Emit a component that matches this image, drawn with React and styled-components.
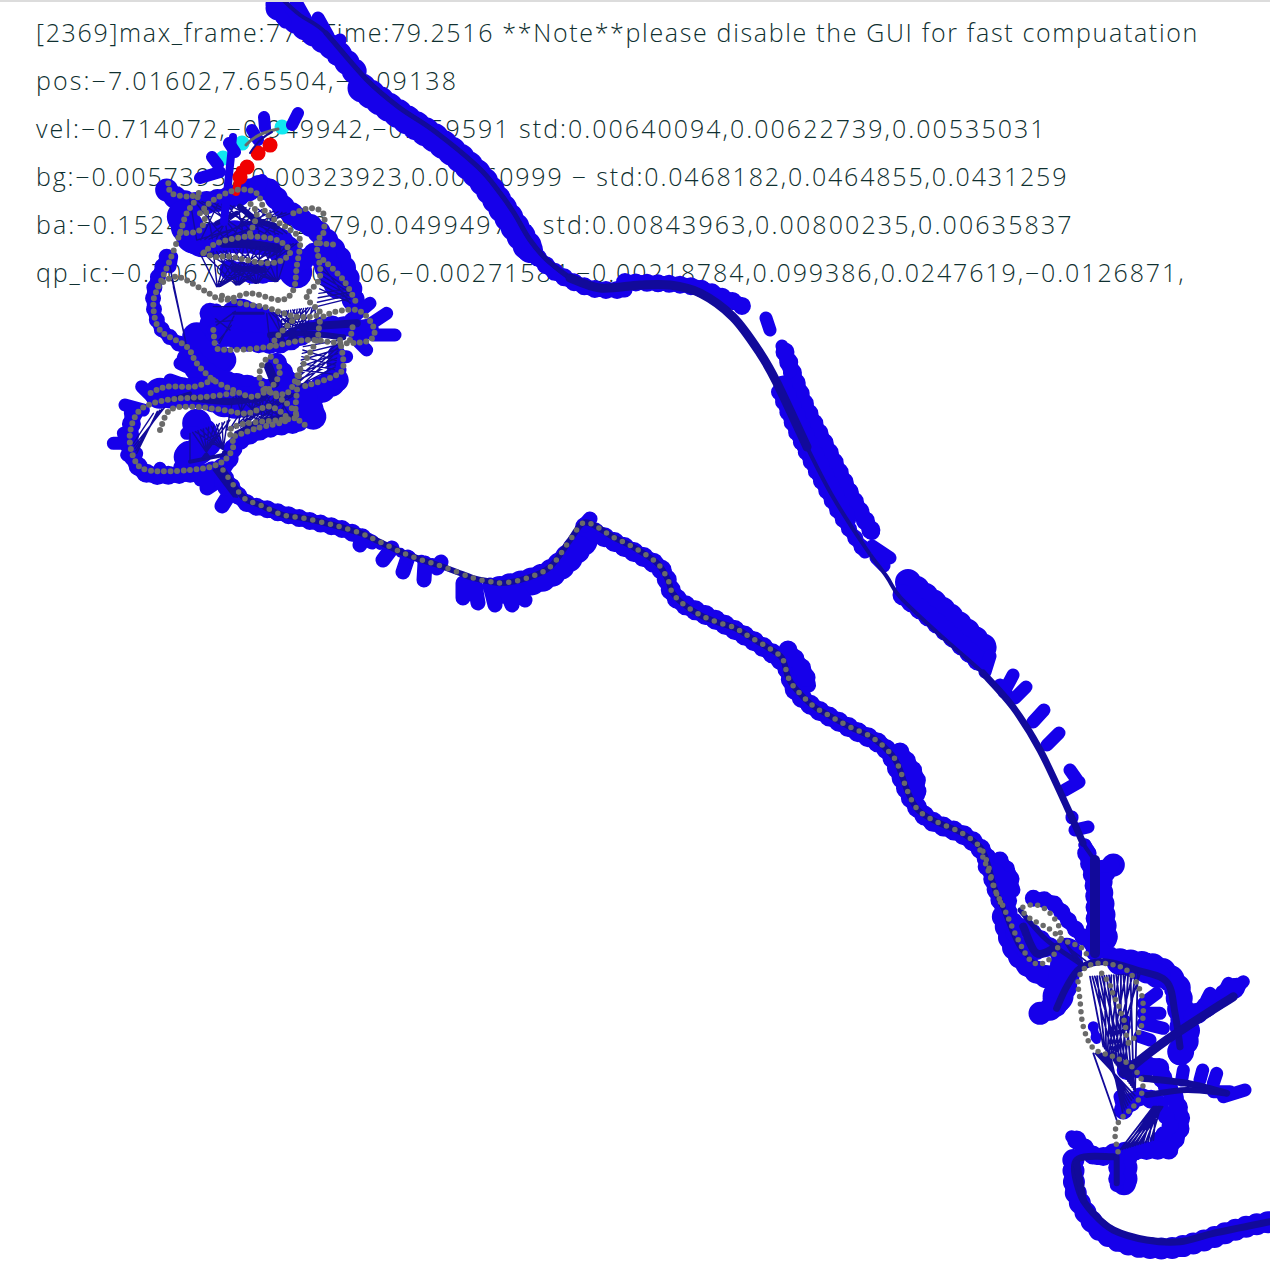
import React from 'react';
import styled, { createGlobalStyle } from 'styled-components';

const GlobalStyle = createGlobalStyle`
  html, body { margin: 0; padding: 0; background: #fff; }
`;

const Page = styled.div`
  position: relative;
  width: 1270px;
  height: 1266px;
  overflow: hidden;
  background: #fff;
  border-top: 2px solid #dcdcdc;
  box-sizing: border-box;
`;

const Hud = styled.div`
  display: flex;
  flex-direction: column;
  padding: 6px 0 0 36px;
`;

const HudRow = styled.div`
  height: 48px;
  line-height: 48px;
  white-space: pre;
  font-family: "Open Sans", "Liberation Sans", sans-serif;
  font-weight: 300;
  font-size: 25px;
  color: #0f3030;
  letter-spacing: ${(p) => p.$spacing}px;
`;

const Plot = styled.svg`
  position: absolute;
  left: 0;
  top: -2px;
`;

const Stroke = styled.path`
  fill: none;
  stroke: ${(p) => p.$color};
  stroke-width: ${(p) => p.$w}px;
  stroke-linecap: round;
  stroke-linejoin: round;
  stroke-dasharray: ${(p) => p.$dash || 'none'};
`;

const BLUE = '#1600ea';
const NAVY = '#120a9a';
const GRAY = '#6a6a6a';

const rows = [
  ['[2369]max_frame:777 Time:79.2516 **Note**please disable the GUI for fast compuatation', 1.67],
  ['pos:−7.01602,7.65504,−1.09138', 2.1],
  ['vel:−0.714072,−0.949942,−0.259591 std:0.00640094,0.00622739,0.00535031', 2.02],
  ['bg:−0.00573937,0.00323923,0.00760999 − std:0.0468182,0.0464855,0.0431259', 1.82],
  ['ba:−0.152486,−0.682279,0.0499497 − std:0.00843963,0.00800235,0.00635837', 2.12],
  ['qp_ic:−0.706793,0.0707406,−0.00271584,−0.00218784,0.099386,0.0247619,−0.0126871,', 1.88],
];

// catmull-rom through the points
const smooth = (pts) => {
  let d = `M${pts[0][0]} ${pts[0][1]}`;
  for (let i = 0; i < pts.length - 1; i++) {
    const a = pts[i - 1] || pts[i];
    const b = pts[i];
    const c = pts[i + 1];
    const e = pts[i + 2] || c;
    const c1x = b[0] + (c[0] - a[0]) / 6;
    const c1y = b[1] + (c[1] - a[1]) / 6;
    const c2x = c[0] - (e[0] - b[0]) / 6;
    const c2y = c[1] - (e[1] - b[1]) / 6;
    d += `C${c1x.toFixed(1)} ${c1y.toFixed(1)} ${c2x.toFixed(1)} ${c2y.toFixed(1)} ${c[0].toFixed(1)} ${c[1].toFixed(1)}`;
  }
  return d;
};

const seg = (s) => `M${s[0]} ${s[1]}L${s[2]} ${s[3]}`;

// fan of thin lines between two segments
const fan = (a, b, n) => {
  let d = '';
  for (let i = 0; i < n; i++) {
    const t = i / (n - 1);
    const u = (t * 7.3) % 1;
    d += `M${a[0] + (a[2] - a[0]) * t} ${a[1] + (a[3] - a[1]) * t}L${b[0] + (b[2] - b[0]) * u} ${b[1] + (b[3] - b[1]) * u}`;
  }
  return d;
};

// points read from crops of the two clusters
const c1 = (pts) => pts.map(([x, y]) => [90 + x / 3, 100 + y / 3]);
const c2 = (pts) => pts.map(([x, y]) => [980 + x / 3, 840 + y / 3]);
const c1s = (s) => [90 + s[0] / 3, 100 + s[1] / 3, 90 + s[2] / 3, 100 + s[3] / 3];
const c2s = (s) => [980 + s[0] / 3, 840 + s[1] / 3, 980 + s[2] / 3, 840 + s[3] / 3];

const topSpine = [[283, 0], [300, 15], [326, 33], [367, 80], [400, 108], [433, 130], [478, 167], [500, 193], [514, 213], [530, 240], [547, 260], [570, 278], [600, 288], [640, 285], [670, 285], [700, 293], [733, 317], [760, 353], [777, 383], [807, 447], [833, 497], [867, 550], [887, 577], [900, 597], [940, 635], [983, 673], [1013, 707], [1040, 750], [1067, 807], [1083, 843], [1097, 867], [1095, 900], [1095, 953]];

const topBands = [
  { pts: [[278, 8], [305, 28], [335, 50], [355, 72]], w: 22 },
  { pts: [[362, 88], [400, 115], [440, 142], [478, 175], [505, 212], [530, 250]], w: 26 },
  { pts: [[530, 250], [555, 272], [590, 288], [625, 290]], w: 15 },
  { pts: [[625, 282], [690, 286], [730, 300], [742, 306]], w: 15 },
  { pts: [[785, 352], [805, 405], [828, 450], [852, 497], [872, 532]], w: 16 },
  { pts: [[779, 392], [795, 430], [815, 470], [840, 515], [865, 552]], w: 13 },
  { pts: [[783, 385], [803, 430], [825, 475], [848, 520]], w: 16 },
  { pts: [[908, 582], [945, 612], [985, 648]], w: 23 },
  { pts: [[903, 595], [945, 630], [980, 662]], w: 18 },
];

const topWhiskers = [
  [766, 318, 770, 330], [782, 346, 790, 372], [872, 546, 890, 558], [876, 558, 884, 566],
  [1013, 675, 1004, 692], [1026, 687, 1015, 698], [1044, 710, 1033, 722], [1059, 733, 1047, 745],
  [1079, 782, 1065, 790], [1088, 827, 1075, 830], [1072, 817, 1072, 818], [1085, 845, 1090, 858],
  [990, 656, 985, 672], [272, 4, 285, 22], [296, 2, 305, 18], [318, 18, 328, 36], [340, 40, 334, 58], [1077, 780, 1070, 770],
  [1000, 685, 1006, 692],
];

const midSpine = [[223, 470], [243, 497], [260, 505], [283, 515], [303, 518], [333, 525], [360, 533], [380, 542], [403, 553], [422, 560], [438, 565], [457, 572], [473, 578], [487, 581], [503, 583], [527, 578], [550, 567], [570, 540], [583, 523], [597, 527], [613, 537], [633, 547], [657, 563], [668, 580], [672, 592], [682, 603], [700, 615], [717, 622], [735, 628], [750, 637], [767, 647], [782, 658], [788, 677], [795, 688], [812, 705], [830, 716], [850, 727], [873, 738], [892, 755], [900, 770], [907, 790], [918, 810], [937, 822], [960, 832], [980, 847], [988, 865], [992, 880], [997, 895], [1003, 907]];

const midBands = [
  { pts: [[225, 478], [245, 502], [270, 510], [310, 521], [345, 530], [372, 542]], w: 15 },
  { pts: [[380, 545], [410, 556], [438, 565]], w: 7 },
  { pts: [[500, 590], [550, 574], [585, 540]], w: 25 },
  { pts: [[585, 527], [600, 535], [630, 550], [660, 568], [672, 592], [685, 605], [720, 622], [760, 645], [785, 665], [795, 690], [815, 708], [850, 728], [885, 748], [900, 775], [912, 800], [930, 820], [965, 836], [985, 855], [995, 885], [1003, 907]], w: 17 },
  { pts: [[788, 650], [803, 670], [808, 685]], w: 16 },
  { pts: [[900, 752], [915, 775], [917, 795]], w: 16 },
  { pts: [[1000, 860], [1010, 875], [1012, 890]], w: 14 },
];

const midWhiskers = [
  [383, 560, 392, 548], [403, 572, 408, 557], [424, 580, 425, 563], [360, 545, 362, 537],
  [463, 598, 463, 583], [478, 603, 475, 585], [495, 605, 490, 585], [512, 605, 505, 587], [525, 600, 515, 587],
  [207, 488, 222, 478], [222, 506, 232, 490], [437, 568, 441, 562], [590, 519, 585, 525],
];

const head = [
  [298, 113, 292, 125], [264, 117, 265, 128], [212, 157, 218, 165], [229, 143, 235, 152], [252, 130, 258, 140],
  [200, 178, 220, 172], [262, 180, 258, 192],
];

// cluster near the start of the drive
const startGray = [
  c1([[235, 250], [245, 280], [300, 290], [330, 280], [290, 340], [270, 400], [240, 480], [210, 550], [190, 610], [210, 690], [290, 740], [320, 790], [370, 840], [430, 870], [490, 890], [545, 860], [570, 810], [540, 770], [510, 810], [520, 860], [590, 910], [620, 950], [570, 960], [470, 970], [420, 990], [430, 1040], [390, 1090], [300, 1110], [170, 1110], [130, 1070], [120, 1000], [150, 930], [230, 900], [350, 890], [430, 880]]),
  c1([[330, 340], [370, 300], [440, 270], [500, 280], [530, 340], [600, 390], [630, 420], [620, 500], [610, 570], [570, 600], [480, 580], [400, 600], [340, 570], [260, 530], [200, 560]]),
  c1([[340, 460], [380, 430], [470, 410], [560, 420], [600, 460], [540, 490], [420, 470], [370, 470], [330, 450]]),
  c1([[520, 870], [590, 880], [630, 810], [680, 720], [700, 650], [800, 630], [850, 680], [840, 720], [760, 730], [650, 720], [540, 740], [430, 750], [370, 745]]),
  c1([[610, 340], [660, 325], [700, 340], [700, 400], [680, 430], [690, 530], [650, 590], [690, 640], [620, 650], [520, 620], [450, 610], [380, 580]]),
  c1([[690, 430], [740, 435]]),
  c1([[700, 480], [760, 540], [800, 610]]),
  c1([[630, 810], [620, 880], [620, 950], [660, 985]]),
  c1([[210, 990], [240, 930], [310, 920], [400, 930], [470, 940], [540, 920], [590, 960], [500, 985], [430, 1010]]),
  c1([[370, 690], [375, 740]]),
  c1([[620, 650], [570, 700], [540, 740]]),
  c1([[780, 720], [790, 670]]),
  c1([[750, 720], [760, 800], [730, 830], [640, 860]]),
  c1([[370, 840], [310, 860], [230, 860], [180, 880]]),
  c1([[270, 400], [330, 390], [350, 330]]),
  c1([[480, 400], [500, 340], [470, 300]]),
];

const startBlue = [
  { pts: c1([[230, 270], [270, 300], [330, 310], [430, 290], [520, 260], [590, 330], [680, 390], [740, 460], [770, 520], [790, 600]]), w: 20 },
  { pts: c1([[280, 350], [320, 420], [420, 410], [560, 430], [620, 520]]), w: 30 },
  { pts: c1([[420, 510], [520, 520], [620, 490], [700, 440]]), w: 18 },
  { pts: c1([[230, 470], [190, 580], [210, 680], [280, 740]]), w: 13 },
  { pts: c1([[450, 660], [520, 690]]), w: 40 },
  { pts: c1([[320, 710], [340, 760], [400, 780]]), w: 26 },
  { pts: c1([[360, 640], [380, 700], [560, 730], [700, 680], [840, 690]]), w: 18 },
  { pts: c1([[300, 780], [370, 840], [500, 870], [640, 890], [740, 840]]), w: 24 },
  { pts: c1([[210, 880], [340, 880], [420, 910], [520, 900], [650, 930]]), w: 28 },
  { pts: c1([[640, 900], [670, 950]]), w: 26 },
  { pts: c1([[130, 940], [120, 1040], [170, 1120], [300, 1120], [400, 1100], [440, 1030], [520, 990], [630, 970]]), w: 16 },
  { pts: c1([[320, 970], [350, 1030], [290, 1070]]), w: 26 },
  { pts: c1([[370, 1110], [400, 1160], [460, 1195]]), w: 12 },
  { pts: c1([[700, 470], [740, 560]]), w: 24 },
  { pts: c1([[740, 760], [730, 830]]), w: 14 },
  { pts: c1([[560, 790], [600, 850]]), w: 18 },
];

const startWhiskers = [
  [840, 610, 780, 660], [890, 640, 830, 680], [915, 705, 850, 705], [830, 750, 800, 720],
  [155, 860, 195, 900], [105, 915, 160, 930], [70, 1030, 130, 1030], [110, 1065, 140, 1060], [160, 1125, 160, 1110],
  [210, 1125, 210, 1105], [355, 1155, 355, 1125], [245, 470, 240, 500], [750, 810, 730, 790], [740, 850, 720, 830],
  [380, 630, 400, 660], [370, 690, 400, 690], [270, 790, 290, 800], [240, 840, 270, 850], [290, 1000, 320, 1000],
  [330, 1140, 330, 1115], [270, 1100, 280, 1120], [100, 1000, 125, 1000], [770, 770, 750, 770],
];

const startNavy = [
  { pts: c1([[400, 430], [470, 432], [560, 445]]), w: 9 },
  { pts: c1([[430, 505], [520, 510]]), w: 6 },
  { pts: c1([[540, 705], [640, 700], [760, 712]]), w: 6 },
  { pts: c1([[640, 680], [800, 670]]), w: 8 },
  { pts: c1([[310, 895], [420, 905], [520, 892]]), w: 7 },
  { pts: c1([[535, 800], [555, 850]]), w: 9 },
  { pts: c1([[380, 1100], [420, 1150], [470, 1195]]), w: 3 },
  { pts: c1([[300, 1085], [400, 1065]]), w: 4 },
  { pts: c1([[430, 640], [520, 640]]), w: 3 },
  { pts: c1([[450, 320], [500, 360], [560, 380]]), w: 6 },
  { pts: c1([[380, 370], [440, 340]]), w: 5 },
  { pts: c1([[240, 900], [300, 880]]), w: 4 },
  { pts: c1([[440, 1000], [520, 960], [610, 950]]), w: 5 },
];

const startFans = [
  fan(c1s([240, 500, 250, 560]), c1s([290, 740, 280, 690]), 5),
  fan(c1s([640, 740, 620, 870]), c1s([750, 720, 730, 830]), 14),
  fan(c1s([700, 500, 680, 620]), c1s([780, 610, 780, 560]), 10),
  fan(c1s([130, 1030, 140, 1060]), c1s([190, 940, 230, 920]), 5),
  fan(c1s([440, 620, 420, 690]), c1s([370, 620, 390, 740]), 6),
  fan(c1s([330, 460, 620, 430]), c1s([380, 560, 610, 540]), 30),
  fan(c1s([430, 890, 620, 880]), c1s([410, 990, 610, 950]), 26),
  fan(c1s([300, 1000, 420, 960]), c1s([300, 1080, 420, 1060]), 16),
  fan(c1s([530, 640, 680, 620]), c1s([540, 730, 690, 720]), 24),
  fan(c1s([370, 1110, 400, 1100]), c1s([430, 1190, 470, 1195]), 8),
  fan(c1s([300, 300, 600, 340]), c1s([320, 420, 600, 400]), 26),
];

// cluster near the end
const endGray = [
  c2([[0, 30], [20, 80], [45, 150], [70, 200], [110, 290], [150, 360], [190, 370], [230, 330], [240, 270], [210, 220], [170, 195], [125, 205], [150, 235], [205, 265], [250, 300], [300, 320], [325, 350]]),
  c2([[445, 610], [480, 570], [490, 510], [480, 450], [440, 390], [370, 370], [320, 380], [295, 420], [300, 480], [310, 560], [340, 625], [400, 650], [450, 675], [485, 720], [485, 760], [460, 800], [420, 840], [405, 880], [415, 940]]),
  c2([[365, 400], [390, 435], [400, 465], [415, 495], [425, 525], [435, 550], [440, 590], [450, 615]]),
];

const endBlue = [
  { pts: c2([[320, 40], [340, 120], [345, 200], [345, 340]]), w: 16 },
  { pts: c2([[400, 75], [365, 110], [370, 200], [380, 300]]), w: 20 },
  { pts: c2([[20, 80], [80, 130], [90, 230], [160, 280], [250, 350]]), w: 15 },
  { pts: c2([[70, 230], [110, 340], [200, 410], [280, 370]]), w: 20 },
  { pts: c2([[90, 250], [130, 330], [200, 330]]), w: 14 },
  { pts: c2([[160, 175], [220, 190], [280, 260], [320, 300], [400, 350]]), w: 14 },
  { pts: c2([[260, 340], [250, 420], [230, 480]]), w: 28 },
  { pts: c2([[180, 520], [230, 500]]), w: 20 },
  { pts: c2([[420, 365], [530, 385], [590, 440], [600, 500], [620, 580], [600, 640]]), w: 24 },
  { pts: c2([[470, 380], [540, 410]]), w: 22 },
  { pts: c2([[600, 560], [680, 500], [770, 440]]), w: 18 },
  { pts: c2([[440, 690], [530, 680], [550, 720], [590, 790], [600, 860], [570, 920]]), w: 17 },
  { pts: c2([[430, 810], [480, 770], [540, 790]]), w: 16 },
  { pts: c2([[540, 800], [570, 860], [530, 900]]), w: 14 },
  { pts: c2([[280, 960], [285, 1050], [315, 1115], [365, 1175], [450, 1215], [560, 1225], [660, 1205], [780, 1165], [870, 1145]]), w: 19 },
  { pts: c2([[290, 900], [350, 950], [420, 935], [570, 930]]), w: 16 },
  { pts: c2([[432, 950], [432, 1030]]), w: 24 },
  { pts: c2([[410, 950], [410, 1035]]), w: 14 },
  { pts: c2([[340, 560], [350, 600]]), w: 8 },
  { pts: c2([[435, 540], [440, 560]]), w: 8 },
];

const endWhiskers = [
  [790, 425, 750, 460], [745, 430, 725, 470], [690, 460, 680, 480], [640, 510, 630, 530],
  [795, 750, 730, 770], [750, 755, 700, 755], [710, 700, 700, 730], [668, 690, 660, 720], [610, 690, 605, 720],
  [530, 460, 490, 490], [540, 520, 490, 520], [550, 565, 490, 550], [510, 600, 480, 590], [275, 890, 330, 945],
  [315, 15, 330, 40], [400, 75, 360, 80], [420, 770, 430, 810],
];

const endNavy = [
  { pts: c2([[345, 60], [345, 200], [345, 340]]), w: 10 },
  { pts: c2([[230, 505], [260, 440], [300, 385], [370, 365], [470, 390], [560, 425], [585, 520], [600, 620]]), w: 7 },
  { pts: c2([[430, 700], [560, 600], [760, 470]]), w: 9 },
  { pts: c2([[490, 715], [620, 730], [740, 760]]), w: 7 },
  { pts: c2([[500, 765], [620, 750], [730, 760]]), w: 6 },
  { pts: c2([[400, 950], [290, 960], [300, 1060], [340, 1120], [400, 1170], [500, 1200], [600, 1205], [700, 1180], [870, 1145]]), w: 7 },
  { pts: c2([[290, 970], [310, 1080]]), w: 7 },
  { pts: c2([[410, 950], [410, 1030]]), w: 6 },
  { pts: c2([[120, 210], [200, 300], [300, 370]]), w: 5 },
  { pts: c2([[130, 260], [170, 340], [230, 320]]), w: 8 },
  { pts: c2([[20, 80], [110, 310], [170, 370]]), w: 3 },
];

const endFans = [
  fan(c2s([340, 640, 390, 640]), c2s([410, 840, 470, 760]), 9),
  fan(c2s([330, 410, 480, 400]), c2s([370, 620, 470, 760]), 22),
  fan(c2s([420, 930, 520, 900]), c2s([520, 800, 550, 800]), 14),
  fan(c2s([250, 300, 280, 340]), c2s([300, 380, 320, 360]), 4),
];

const Trail = ({ bands, whiskers, whiskerW = 13 }) => (
  <>
    {bands.map((b, i) => (
      <g key={i}>
        <Stroke d={smooth(b.pts)} $color={BLUE} $w={b.w} />
        <Stroke d={smooth(b.pts)} $color={BLUE} $w={b.w + 3} $dash="0 11" />
      </g>
    ))}
    <Stroke d={whiskers.map(seg).join('')} $color={BLUE} $w={whiskerW} />
  </>
);

const Trajectory = () => (
  <Plot width="1270" height="1266" viewBox="0 0 1270 1266">
    <Stroke d="M282 127L282.1 127.1M242 143L242.1 143.1M223 158L223.1 158.1" $color="#10e8f0" $w={15} />

    <Trail bands={topBands} whiskers={topWhiskers} />
    <Trail bands={midBands} whiskers={midWhiskers} whiskerW={15} />
    <Trail bands={startBlue} whiskers={startWhiskers.map(c1s)} />
    <Trail bands={endBlue} whiskers={endWhiskers.map(c2s)} />
    <Stroke d={head.map(seg).join('')} $color={BLUE} $w={12} />

    <Stroke d={smooth(topSpine)} $color={NAVY} $w={4} />
    <Stroke d={smooth(topSpine.slice(2, 12))} $color={NAVY} $w={5} />
    <Stroke d={smooth(topSpine.slice(11, 20))} $color={NAVY} $w={9} />
    <Stroke d={smooth(topSpine.slice(25, 30))} $color={NAVY} $w={7} />
    <Stroke d={smooth(midSpine)} $color={NAVY} $w={6} />
    {endNavy.map((b, i) => <Stroke key={i} d={smooth(b.pts)} $color={NAVY} $w={b.w} />)}
    {startNavy.map((b, i) => <Stroke key={i} d={smooth(b.pts)} $color={NAVY} $w={b.w} />)}
    {startFans.map((d, i) => <Stroke key={i} d={d} $color={NAVY} $w={1.4} />)}
    {endFans.map((d, i) => <Stroke key={i} d={d} $color={NAVY} $w={1.8} />)}

    <Stroke d="M224 222L233 137" $color={BLUE} $w={8} />
    <Stroke d="M270 145L270.1 145.1M258 153L258.1 153.1M247 167L247.1 167.1M240 177L240.1 177.1" $color="#f00000" $w={15} />
    <Stroke d="M236 192L240 170" $color="#f00000" $w={8} />
    <Stroke d="M246 145C255 135 265 132 278 129" $color={GRAY} $w={3} />
    <Stroke d="M250 153C258 140 266 135 272 132" $color={NAVY} $w={2} />

    <Stroke d={smooth(midSpine)} $color={GRAY} $w={5.5} $dash="0 9" />
    {startGray.map((p, i) => <Stroke key={i} d={smooth(p)} $color={GRAY} $w={6} $dash="0 6.5" />)}
    {endGray.map((p, i) => <Stroke key={i} d={smooth(p)} $color={GRAY} $w={5.5} $dash="0 7.5" />)}
  </Plot>
);

const App = () => (
  <>
    <GlobalStyle />
    <Page>
      <Hud>
        {rows.map(([text, spacing]) => (
          <HudRow key={text} $spacing={spacing}>{text}</HudRow>
        ))}
      </Hud>
      <Trajectory />
    </Page>
  </>
);

export default App;
